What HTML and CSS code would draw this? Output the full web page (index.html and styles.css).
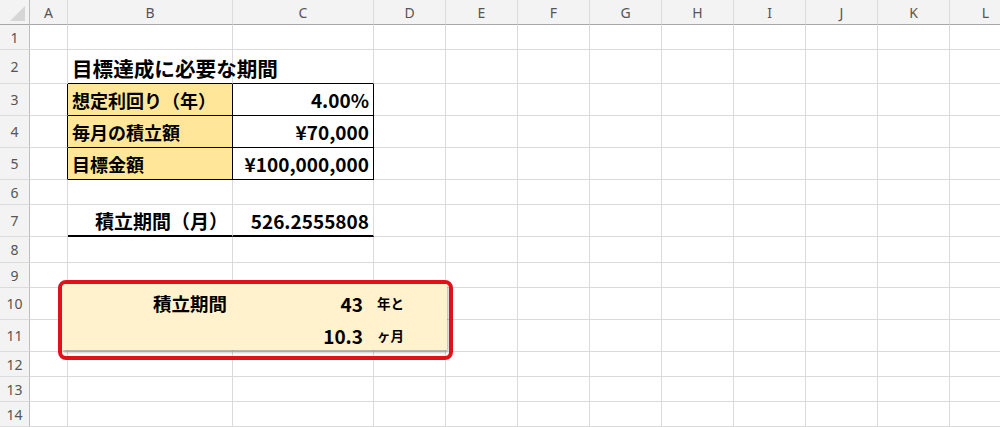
FILE: index.html
```html
<!DOCTYPE html>
<html lang="ja">
<head>
<meta charset="utf-8">
<title>目標達成に必要な期間</title>
<link rel="stylesheet" href="styles.css">
</head>
<body>
<div class="sheet">
  <div class="row rh-head">
    <div class="corner"><span class="tri"></span></div>
    <div class="ch">A</div><div class="ch">B</div><div class="ch">C</div><div class="ch">D</div><div class="ch">E</div><div class="ch">F</div><div class="ch">G</div><div class="ch">H</div><div class="ch">I</div><div class="ch">J</div><div class="ch">K</div><div class="ch">L</div>
  </div>
  <div class="row h25">
    <div class="rn">1</div><div class="c"></div><div class="c"></div><div class="c"></div><div class="c"></div><div class="c"></div><div class="c"></div><div class="c"></div><div class="c"></div><div class="c"></div><div class="c"></div><div class="c"></div><div class="c"></div>
  </div>
  <div class="row h34">
    <div class="rn">2</div><div class="c"></div><div class="c bb title">目標達成に必要な期間</div><div class="c bb"></div><div class="c"></div><div class="c"></div><div class="c"></div><div class="c"></div><div class="c"></div><div class="c"></div><div class="c"></div><div class="c"></div><div class="c"></div>
  </div>
  <div class="row h32">
    <div class="rn">3</div><div class="c br"></div><div class="c br bb label fill">想定利回り（年）</div><div class="c br bb num">4.00%</div><div class="c"></div><div class="c"></div><div class="c"></div><div class="c"></div><div class="c"></div><div class="c"></div><div class="c"></div><div class="c"></div><div class="c"></div>
  </div>
  <div class="row h32">
    <div class="rn">4</div><div class="c br"></div><div class="c br bb label fill">毎月の積立額</div><div class="c br bb num">¥70,000</div><div class="c"></div><div class="c"></div><div class="c"></div><div class="c"></div><div class="c"></div><div class="c"></div><div class="c"></div><div class="c"></div><div class="c"></div>
  </div>
  <div class="row h32">
    <div class="rn">5</div><div class="c br"></div><div class="c br bb label fill">目標金額</div><div class="c br bb num">¥100,000,000</div><div class="c"></div><div class="c"></div><div class="c"></div><div class="c"></div><div class="c"></div><div class="c"></div><div class="c"></div><div class="c"></div><div class="c"></div>
  </div>
  <div class="row h25">
    <div class="rn">6</div><div class="c"></div><div class="c"></div><div class="c"></div><div class="c"></div><div class="c"></div><div class="c"></div><div class="c"></div><div class="c"></div><div class="c"></div><div class="c"></div><div class="c"></div><div class="c"></div>
  </div>
  <div class="row h32">
    <div class="rn">7</div><div class="c"></div><div class="c bb2 num">積立期間（月）</div><div class="c bb2 num">526.2555808</div><div class="c"></div><div class="c"></div><div class="c"></div><div class="c"></div><div class="c"></div><div class="c"></div><div class="c"></div><div class="c"></div><div class="c"></div>
  </div>
  <div class="row h26">
    <div class="rn">8</div><div class="c"></div><div class="c"></div><div class="c"></div><div class="c"></div><div class="c"></div><div class="c"></div><div class="c"></div><div class="c"></div><div class="c"></div><div class="c"></div><div class="c"></div><div class="c"></div>
  </div>
  <div class="row h25">
    <div class="rn">9</div><div class="c"></div><div class="c"></div><div class="c"></div><div class="c"></div><div class="c"></div><div class="c"></div><div class="c"></div><div class="c"></div><div class="c"></div><div class="c"></div><div class="c"></div><div class="c"></div>
  </div>
  <div class="row h32">
    <div class="rn">10</div><div class="c"></div><div class="c"></div><div class="c"></div><div class="c"></div><div class="c"></div><div class="c"></div><div class="c"></div><div class="c"></div><div class="c"></div><div class="c"></div><div class="c"></div><div class="c"></div>
  </div>
  <div class="row h32">
    <div class="rn">11</div><div class="c"></div><div class="c"></div><div class="c"></div><div class="c"></div><div class="c"></div><div class="c"></div><div class="c"></div><div class="c"></div><div class="c"></div><div class="c"></div><div class="c"></div><div class="c"></div>
  </div>
  <div class="row h25">
    <div class="rn">12</div><div class="c"></div><div class="c"></div><div class="c"></div><div class="c"></div><div class="c"></div><div class="c"></div><div class="c"></div><div class="c"></div><div class="c"></div><div class="c"></div><div class="c"></div><div class="c"></div>
  </div>
  <div class="row h25">
    <div class="rn">13</div><div class="c"></div><div class="c"></div><div class="c"></div><div class="c"></div><div class="c"></div><div class="c"></div><div class="c"></div><div class="c"></div><div class="c"></div><div class="c"></div><div class="c"></div><div class="c"></div>
  </div>
  <div class="row h25">
    <div class="rn">14</div><div class="c"></div><div class="c"></div><div class="c"></div><div class="c"></div><div class="c"></div><div class="c"></div><div class="c"></div><div class="c"></div><div class="c"></div><div class="c"></div><div class="c"></div><div class="c"></div>
  </div>

  <div class="result">
    <div class="result-fill">
      <div class="rlabel">積立期間</div>
      <div class="rnum">43</div>
      <div class="runit">年と</div>
      <div class="rlabel"></div>
      <div class="rnum">10.3</div>
      <div class="runit">ヶ月</div>
    </div>
  </div>
</div>
</body>
</html>
```
FILE: styles.css
```css
html, body {
  margin: 0;
  padding: 0;
  background: #ffffff;
}
body {
  width: 1000px;
  height: 427px;
  overflow: hidden;
  font-family: "Noto Sans CJK JP", "Noto Sans", sans-serif;
}
.sheet {
  position: relative;
  width: 1030px;
}
.row {
  display: grid;
  grid-template-columns: 30px 38px 165px 141px repeat(9, 72px);
}
.rh-head { height: 25px; }
.h25 { height: 25px; }
.h26 { height: 26px; }
.h32 { height: 32px; }
.h34 { height: 34px; }

.corner, .ch, .rn, .c {
  box-sizing: border-box;
}
.corner {
  position: relative;
  background: #f3f3f3;
  border-right: 1px solid #bdbdbd;
  border-bottom: 1px solid #a8a8a8;
}
.tri {
  position: absolute;
  right: 4px;
  bottom: 3px;
  width: 15px;
  height: 15px;
  background: #d6d6d6;
  clip-path: polygon(100% 0, 100% 100%, 0 100%);
}
.ch {
  background: #f3f3f3;
  border-right: 1px solid #dcdcdc;
  border-bottom: 1px solid #a8a8a8;
  display: flex;
  align-items: center;
  justify-content: center;
  font-family: "Noto Sans", sans-serif;
  font-size: 14px;
  color: #555555;
  padding-top: 1px;
}
.rn {
  background: #f3f3f3;
  border-right: 1px solid #bdbdbd;
  border-bottom: 1px solid #dcdcdc;
  display: flex;
  align-items: center;
  justify-content: center;
  font-family: "Noto Sans", sans-serif;
  font-size: 14px;
  color: #555555;
}
.c {
  border-right: 1px solid #dadada;
  border-bottom: 1px solid #dadada;
  display: flex;
  align-items: center;
  font-weight: 700;
  font-size: 18px;
  color: #000000;
  white-space: nowrap;
  overflow: visible;
}
.br { border-right-color: #000000; }
.bb { border-bottom-color: #000000; }
.bb2 {
  border-bottom: 2px solid #000000;
}
.fill { background: #ffe699; }
.title {
  font-size: 20.6px;
  padding-left: 4px;
  padding-top: 2px;
}
.label { padding-left: 4px; }
.num {
  justify-content: flex-end;
  padding-right: 4px;
  font-size: 19px;
}

.result {
  position: absolute;
  left: 58px;
  top: 280px;
  width: 395px;
  height: 80px;
  box-sizing: border-box;
  border: 4px solid #e3101a;
  border-radius: 8px;
  overflow: hidden;
}
.result-fill {
  position: absolute;
  left: 0;
  top: 0;
  right: 2px;
  bottom: 6px;
  background: #fff2cc;
  box-shadow: 1px 2px 3px rgba(0, 0, 0, 0.35);
  display: grid;
  grid-template-columns: 91px 110px 100px 14px auto;
  grid-template-rows: 32px 32px;
  padding-top: 3px;
  box-sizing: border-box;
  font-weight: 700;
  color: #000000;
}
.rlabel {
  grid-column: 2;
  display: flex;
  align-items: center;
  font-size: 18.5px;
}
.rnum {
  grid-column: 3;
  display: flex;
  align-items: center;
  justify-content: flex-end;
  font-size: 19px;
}
.runit {
  grid-column: 5;
  display: flex;
  align-items: center;
  font-size: 13.5px;
}
```
